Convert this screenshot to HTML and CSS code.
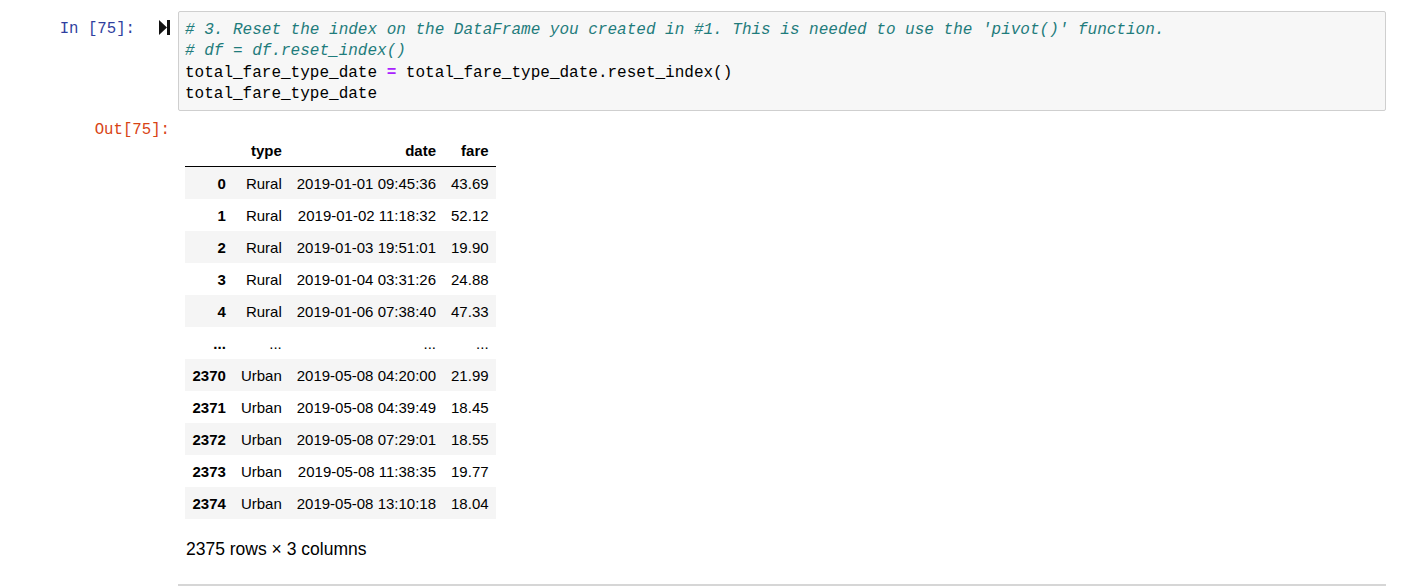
FILE: index.html
```html
<!DOCTYPE html>
<html>
<head>
<meta charset="utf-8">
<link rel="stylesheet" href="styles.css">
</head>
<body>
<div class="cell">
  <div class="in-row">
    <div class="prompt in-prompt">In [75]:</div>
    <div class="run-slot">
      <svg class="run-icon" width="11" height="15" viewBox="0 0 11 15"><polygon points="0,0 8,7.5 0,15" fill="#111"/><rect x="8" y="0" width="3" height="15" fill="#111"/></svg>
    </div>
    <div class="code"><div class="line cm"># 3. Reset the index on the DataFrame you created in #1. This is needed to use the 'pivot()' function.</div><div class="line cm"># df = df.reset_index()</div><div class="line">total_fare_type_date <span class="op">=</span> total_fare_type_date.reset_index()</div><div class="line">total_fare_type_date</div></div>
  </div>
  <div class="out-row">
    <div class="prompt out-prompt">Out[75]:</div>
    <div class="output">
      <table class="df">
        <thead>
          <tr><th></th><th>type</th><th>date</th><th>fare</th></tr>
        </thead>
        <tbody>
          <tr><th>0</th><td>Rural</td><td>2019-01-01 09:45:36</td><td>43.69</td></tr>
          <tr><th>1</th><td>Rural</td><td>2019-01-02 11:18:32</td><td>52.12</td></tr>
          <tr><th>2</th><td>Rural</td><td>2019-01-03 19:51:01</td><td>19.90</td></tr>
          <tr><th>3</th><td>Rural</td><td>2019-01-04 03:31:26</td><td>24.88</td></tr>
          <tr><th>4</th><td>Rural</td><td>2019-01-06 07:38:40</td><td>47.33</td></tr>
          <tr><th>...</th><td>...</td><td>...</td><td>...</td></tr>
          <tr><th>2370</th><td>Urban</td><td>2019-05-08 04:20:00</td><td>21.99</td></tr>
          <tr><th>2371</th><td>Urban</td><td>2019-05-08 04:39:49</td><td>18.45</td></tr>
          <tr><th>2372</th><td>Urban</td><td>2019-05-08 07:29:01</td><td>18.55</td></tr>
          <tr><th>2373</th><td>Urban</td><td>2019-05-08 11:38:35</td><td>19.77</td></tr>
          <tr><th>2374</th><td>Urban</td><td>2019-05-08 13:10:18</td><td>18.04</td></tr>
        </tbody>
      </table>
      <p class="shape">2375 rows × 3 columns</p>
    </div>
  </div>
  <div class="sep"></div>
</div>
</body>
</html>
```

FILE: styles.css
```css
html, body {
  margin: 0;
  padding: 0;
  background: #fff;
}
.cell {
  padding-top: 11px;
  width: 1386px;
}
.in-row {
  display: flex;
  align-items: flex-start;
}
.prompt {
  font-family: "Liberation Mono", "DejaVu Sans Mono", monospace;
  font-size: 15.7px;
  line-height: 21px;
  text-align: right;
  flex: none;
  white-space: pre;
}
.in-prompt {
  width: 135px;
  color: #303f9f;
  padding-top: 8px;
}
.run-slot {
  width: 43px;
  flex: none;
  display: flex;
  justify-content: flex-end;
  padding-top: 9px;
  padding-right: 8px;
  box-sizing: border-box;
}
.run-icon {
  display: block;
}
.code {
  flex: 1;
  background: #f7f7f7;
  border: 1px solid #cfcfcf;
  border-radius: 2px;
  padding: 8px 6px 5px 6px;
  font-family: "Liberation Mono", "DejaVu Sans Mono", monospace;
  font-size: 16px;
  line-height: 21.3px;
  color: #000;
  white-space: pre;
  box-sizing: border-box;
  height: 100px;
}
.line {
  white-space: pre;
}
.cm {
  color: #1f7c7c;
  font-style: italic;
}
.op {
  color: #aa22ff;
  font-weight: bold;
}
.out-row {
  display: flex;
  align-items: flex-start;
  padding-top: 9px;
}
.out-prompt {
  width: 170px;
  color: #d84315;
  padding-right: 8px;
}
.output {
  padding-left: 7px;
  padding-top: 14px;
}
.df {
  border-collapse: collapse;
  border-spacing: 0;
  font-family: "Liberation Sans", Arial, sans-serif;
  font-size: 15px;
  color: #000;
}
.df th, .df td {
  text-align: right;
  padding: 0 7.5px;
  height: 32px;
  line-height: 17px;
  vertical-align: middle;
  white-space: nowrap;
}
.df thead th {
  font-weight: bold;
  border-bottom: 1px solid #000;
  height: 32px;
}
.df tbody th {
  font-weight: bold;
}
.df tbody tr:nth-child(odd) {
  background: #f5f5f5;
}
.shape {
  font-family: "Liberation Sans", Arial, sans-serif;
  font-size: 17.5px;
  margin: 20px 0 0 1px;
  line-height: 20px;
}
.sep {
  margin-top: 25px;
  margin-left: 178px;
  border-top: 2px solid #d6d6d6;
}
```
